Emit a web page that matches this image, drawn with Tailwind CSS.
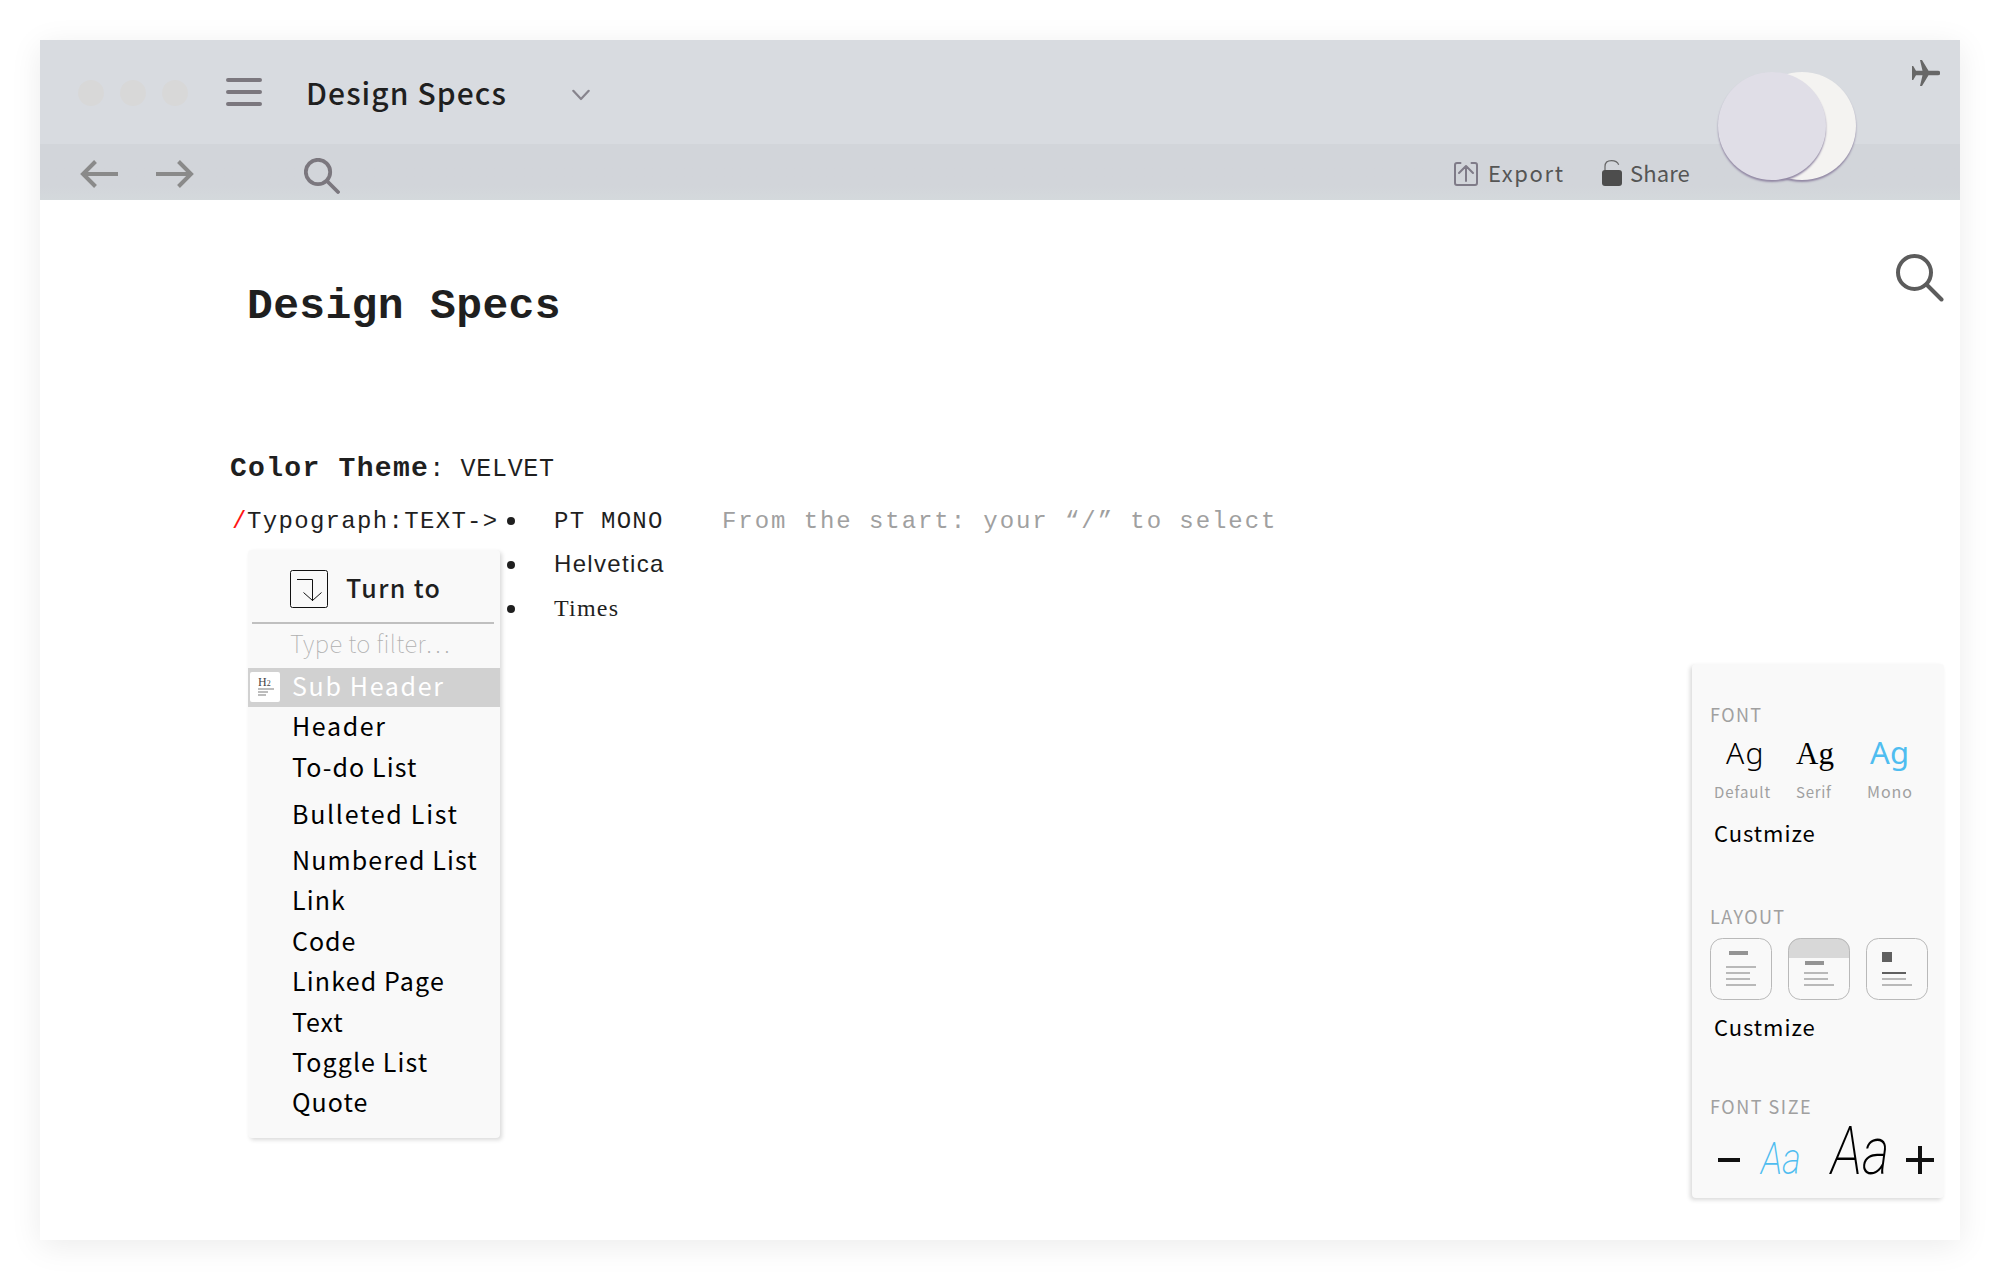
<!DOCTYPE html>
<html lang="en">
<head>
<meta charset="utf-8">
<title>Design Specs</title>
<script src="https://cdn.jsdelivr.net/npm/@tailwindcss/browser@4"></script>
</head>
<body class="h-[1280px] w-[2000px] overflow-hidden bg-white p-10 font-['Noto_Sans_CJK_SC',sans-serif] text-[#1f1f1f]">
<div class="relative h-[1200px] w-[1920px] bg-white shadow-[0_6px_30px_rgba(0,0,0,0.08)]">

  <!-- Window header -->
  <header>
    <div class="flex h-[104px] items-center bg-[#d8dbe0] pl-[38px]">
      <div class="mt-0.5 flex gap-4">
        <span class="size-[26px] rounded-full bg-[#d8d8d8]"></span>
        <span class="size-[26px] rounded-full bg-[#d8d8d8]"></span>
        <span class="size-[26px] rounded-full bg-[#d8d8d8]"></span>
      </div>
      <svg class="ml-[38px] h-7 w-9" viewBox="0 0 36 28" fill="none" stroke="#7b777e" stroke-width="4" stroke-linecap="round"><path d="M2 2h32M2 14h32M2 26h32"/></svg>
      <h2 class="ml-[44px] w-[200px] whitespace-nowrap text-[30px] leading-[40px] font-medium tracking-[1.09px]">Design Specs</h2>
      <svg class="mt-1.5 ml-[66px] h-3 w-[18px]" viewBox="0 0 18 12" fill="none" stroke="#87848d" stroke-width="2.2" stroke-linecap="round" stroke-linejoin="round"><path d="M1.3 1.8 9 10l7.7-8.2"/></svg>
    </div>
    <div class="flex h-14 items-center bg-linear-to-b from-[#d2d5da] from-75% to-[#d4d9dc] pl-10 text-[#555]">
      <svg class="mt-1 h-7 w-[38px]" viewBox="0 0 38 28" fill="none" stroke="#8a8a8a" stroke-width="4"><path d="M38 14H3M15.500 1.500 3 14l12.500 12.500"/></svg>
      <svg class="mt-1 ml-[38px] h-7 w-[38px]" viewBox="0 0 38 28" fill="none" stroke="#8a8a8a" stroke-width="4"><path d="M0 14h35M22.500 1.500 35 14 22.500 26.500"/></svg>
      <svg class="mt-2 ml-[110px] size-9" viewBox="0 0 36 36" fill="none" stroke="#7b777e" stroke-width="3.8" stroke-linecap="round"><circle cx="14" cy="14" r="12.200"/><path d="m23 23 11 11"/></svg>
      <div class="ml-[1114px] flex w-[148px] items-center">
        <svg class="mt-1 size-6" viewBox="0 0 24 24" fill="none" stroke="#7f7b88" stroke-width="2" stroke-linecap="round" stroke-linejoin="round"><path d="M6.500 1H3a2 2 0 0 0-2 2v18a2 2 0 0 0 2 2h18a2 2 0 0 0 2-2V3a2 2 0 0 0-2-2h-3.500M12 19V4M5 11l7-7 7 7"/></svg>
        <span class="ml-2.5 whitespace-nowrap text-[22px] leading-8 tracking-[1.6px]">Export</span>
      </div>
      <div class="flex items-center">
        <svg class="mt-0.5 h-[26px] w-5" viewBox="0 0 20 26"><path d="M3 11V6.500C3 2.800 5.500.7 9.500.7c3.500 0 6 1.300 7.200 4.100" fill="none" stroke="#666" stroke-width="1.200"/><rect y="10" width="20" height="16" rx="3" fill="#4d4d4d"/></svg>
        <span class="ml-2 text-[22px] leading-8 tracking-[0.1px]">Share</span>
      </div>
    </div>
  </header>

  <!-- Moon toggle and status icon over the header -->
  <span class="absolute top-8 left-[1708px] size-[108px] rounded-full bg-[#f4f3f1] shadow-[0_2px_2px_#9288a4]"></span>
  <span class="absolute top-8 left-[1678px] size-[108px] rounded-full bg-[#e0dee7] shadow-[0_2px_2px_#9288a4]"></span>
  <svg class="absolute top-5 left-[1872px] h-[26px] w-7" viewBox="0 0 28 26" fill="#676767"><path d="M0 6h1.200L4 10.800h6.500L8 0h2l6.500 10.800H26a2.200 2.200 0 0 1 0 4.400h-9.500L10 26H8l2.500-10.800H4L1.200 20H0z"/></svg>
  <svg class="absolute top-[214px] left-[1856px] size-12" viewBox="0 0 48 48" fill="none" stroke="#5c5c5c" stroke-width="4" stroke-linecap="round"><circle cx="18.500" cy="18.500" r="16.500"/><path d="m31 31 14.500 14.500"/></svg>

  <!-- Document -->
  <main class="pt-[83px] pl-[190px]">
    <h1 class="pl-[17px] font-['Liberation_Mono',monospace] text-[43px] leading-[48px] font-bold tracking-[0.35px]">Design Specs</h1>
    <div class="mt-[118px] flex items-baseline font-['Liberation_Mono',monospace] leading-[40px] whitespace-pre">
      <b class="text-[28px] tracking-[1.3px]">Color Theme</b><span class="text-[25px] tracking-[0.7px]">: VELVET</span>
    </div>
    <div class="mt-2.5 flex font-['Liberation_Mono',monospace] text-[24px] leading-[44px] whitespace-nowrap">
      <p class="w-[275px] pl-[2px] tracking-[1.32px]"><span class="inline-block w-[15px] text-[#ff1414]">/</span>Typograph:TEXT-&gt;</p>
      <ul class="w-[217px]">
        <li class="flex h-11 items-center"><span class="-mt-[3px] mr-[39px] ml-[2px] size-2 rounded-full bg-[#1f1f1f]"></span><span class="tracking-[1.26px]">PT MONO</span></li>
        <li class="flex h-11 items-center"><span class="-mt-[3px] mr-[39px] ml-[2px] size-2 rounded-full bg-[#1f1f1f]"></span><span class="-mt-1 font-['Liberation_Sans',sans-serif] tracking-[1.33px]">Helvetica</span></li>
        <li class="flex h-11 items-center"><span class="-mt-[3px] mr-[39px] ml-[2px] size-2 rounded-full bg-[#1f1f1f]"></span><span class="-mt-1 font-['Liberation_Serif',serif] tracking-[1.22px]">Times</span></li>
      </ul>
      <p class="tracking-[1.93px] text-[#a0a0a0]">From the start: your “/” to select</p>
    </div>
  </main>

  <!-- Block type menu -->
  <section class="absolute top-[510px] left-[208px] h-[588px] w-[252px] rounded bg-[#f9f9f9] shadow-[2px_2px_4px_rgba(0,0,0,0.15)]">
    <div class="mr-1.5 ml-1 flex h-[74px] items-center border-b-2 border-[#c0c0c0] pl-[38px]">
      <svg class="mt-[5px] h-[38px] w-[38px]" viewBox="0 0 38 38" fill="none" stroke="#111"><rect x=".5" y=".5" width="37" height="37" rx="2"/><path d="M7 9.500h15.500V31M13.500 22.500l9 8 9-8"/></svg>
      <h3 class="mt-px ml-[18px] text-[25px] leading-[40px] font-medium tracking-[1.35px]">Turn to</h3>
    </div>
    <p class="h-11 pl-[42px] text-[24px] leading-[38px] font-thin tracking-[0.4px] text-[#b0b0b0]">Type to filter…</p>
    <div class="flex h-[39px] bg-[#d1d1d1] pt-1 pl-0.5 text-white">
      <svg class="size-[30px]" viewBox="0 0 30 30"><rect width="30" height="30" rx="2" fill="#fff"/><text x="8" y="14" font-family="Liberation Serif, serif" font-size="12" fill="#444">H<tspan font-size="8">2</tspan></text><path d="M8 17h16M8 20h10M8 23h8" stroke="#bdbdbd" stroke-width="2"/></svg>
      <span class="ml-3 text-[25px] leading-[26px] tracking-[1.68px]">Sub Header</span>
    </div>
    <ul class="-mt-0.5 pl-[44px] text-[25px] leading-[40px] whitespace-nowrap text-black">
      <li class="tracking-[1.65px]">Header</li>
      <li class="mt-px tracking-[1.12px]">To-do List</li>
      <li class="mt-[7px] tracking-[1.72px]">Bulleted List</li>
      <li class="mt-1.5 tracking-[1.13px]">Numbered List</li>
      <li class="tracking-[1.1px]">Link</li>
      <li class="mt-px tracking-[0.97px]">Code</li>
      <li class="tracking-[1.16px]">Linked Page</li>
      <li class="mt-px tracking-[0.9px]">Text</li>
      <li class="tracking-[1.1px]">Toggle List</li>
      <li class="tracking-[1.01px]">Quote</li>
    </ul>
  </section>

  <!-- Appearance panel -->
  <aside class="absolute top-[624px] left-[1652px] h-[534px] w-[252px] rounded bg-[#f9f9f9] pt-10 pl-[18px] text-[#a0a0a0] shadow-[-2px_2px_4px_rgba(0,0,0,0.15)]">
    <h4 class="text-[18px] leading-5 tracking-[1.4px]">FONT</h4>
    <div class="mt-2 flex h-10 items-baseline leading-[40px]">
      <span class="ml-4 w-[70px] font-['Noto_Sans',sans-serif] text-[30px] font-light tracking-[1.2px] text-black">Ag</span>
      <span class="w-[74px] font-['Liberation_Serif',serif] text-[31px] text-black">Ag</span>
      <span class="font-['Noto_Sans',sans-serif] text-[31px] tracking-[0.2px] text-[#4fbdf0]">Ag</span>
    </div>
    <div class="mt-[9px] flex h-5 items-baseline leading-5">
      <span class="ml-1 w-[82px] text-[15px] tracking-[0.92px]">Default</span>
      <span class="w-[71px] text-[15px] tracking-[0.7px]">Serif</span>
      <span class="text-[16px] tracking-[0.95px]">Mono</span>
    </div>
    <p class="mt-[15px] pl-1 text-[22px] leading-8 tracking-[0.95px] text-black">Custmize</p>
    <h4 class="mt-[58px] text-[18px] leading-5 tracking-[1.45px]">LAYOUT</h4>
    <div class="mt-3 flex gap-4">
      <svg class="size-[62px]" viewBox="0 0 62 62"><rect x=".5" y=".5" width="61" height="61" rx="12" fill="none" stroke="#b9b9b9"/><path d="M19 15h19" stroke="#949494" stroke-width="4"/><path d="M16 29h30M16 35h24M16 41h24M16 47h30" stroke="#b9b9b9" stroke-width="2"/></svg>
      <svg class="size-[62px]" viewBox="0 0 62 62"><path d="M0 20v-7.500A12.500 12.500 0 0 1 12.500 0h37A12.500 12.500 0 0 1 62 12.500V20z" fill="#d8d8d8"/><rect x=".5" y=".5" width="61" height="61" rx="12" fill="none" stroke="#b9b9b9"/><path d="M17 25h19" stroke="#949494" stroke-width="4"/><path d="M16 35h24M16 41h24M16 47h30" stroke="#b9b9b9" stroke-width="2"/></svg>
      <svg class="size-[62px]" viewBox="0 0 62 62"><rect x=".5" y=".5" width="61" height="61" rx="12" fill="none" stroke="#b9b9b9"/><path d="M16 14h10v10H16z" fill="#606060"/><path d="M16 35h24" stroke="#606060" stroke-width="2"/><path d="M16 41h24M16 47h30" stroke="#b9b9b9" stroke-width="2"/></svg>
    </div>
    <p class="mt-2.5 pl-1 text-[22px] leading-8 tracking-[0.95px] text-black">Custmize</p>
    <h4 class="mt-[54px] text-[18px] leading-5 tracking-[1.53px]">FONT SIZE</h4>
    <div class="mt-[3px] flex h-16 items-baseline font-['Roboto',sans-serif] leading-[64px] text-black italic">
      <svg class="ml-2 inline h-7 w-[22px]" viewBox="0 0 22 28"><path d="M0 14h22" stroke="#111" stroke-width="4"/></svg>
      <span class="ml-[21px] w-[70px] origin-left scale-x-[0.8] text-[45px] font-extralight text-[#4fbdf0]">Aa</span>
      <span class="w-[75px] origin-left scale-x-[0.79] text-[67px] font-extralight">Aa</span>
      <svg class="inline size-7" viewBox="0 0 28 28"><path d="M0 14h28M14 0v28" stroke="#111" stroke-width="4"/></svg>
    </div>
  </aside>
</div>
</body>
</html>
